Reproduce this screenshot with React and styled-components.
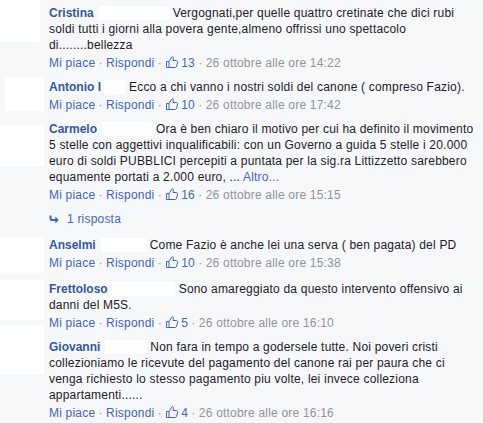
import React from "react";
import styled, { createGlobalStyle } from "styled-components";

const GlobalStyle = createGlobalStyle`
  html, body {
    margin: 0;
    padding: 0;
    background: #f6f7f9;
  }
  body {
    font-family: "Liberation Sans", Arial, Helvetica, sans-serif;
    font-size: 12px;
    line-height: 16px;
    letter-spacing: 0.2px;
    color: #1d2129;
  }
`;

const List = styled.div`
  padding: 5px 4px 0 0;
  width: 483px;
  box-sizing: border-box;
`;

const Row = styled.div`
  display: flex;
  align-items: flex-start;
  margin-bottom: ${(p) => p.$gap ?? 8}px;
`;

const AvatarSlot = styled.div`
  flex: none;
  width: 49px;
`;

const Avatar = styled.div`
  background: #ffffff;
  width: ${(p) => p.$w}px;
  height: ${(p) => p.$h}px;
  margin-left: ${(p) => p.$x}px;
  margin-top: ${(p) => p.$y}px;
`;

const Content = styled.div`
  flex: 1;
  min-width: 0;
`;

const Body = styled.p`
  margin: 0;
`;

const Name = styled.a`
  color: #365899;
  font-weight: bold;
  letter-spacing: 0;
  text-decoration: none;
`;

const Redact = styled.span`
  display: inline-block;
  width: ${(p) => p.$w}px;
  height: 14px;
  background: #ffffff;
  vertical-align: -3px;
  margin: 0 4px 0 ${(p) => p.$ml ?? 5}px;
`;

const More = styled.a`
  color: #4267b2;
  text-decoration: none;
`;

const Actions = styled.div`
  margin-top: 2px;
  color: #90949c;
  display: flex;
  align-items: center;
  white-space: nowrap;
`;

const ActionLink = styled.a`
  color: #4267b2;
  text-decoration: none;
`;

const Sep = styled.span`
  padding: 0 3.3px;
`;

const Likes = styled.span`
  display: inline-flex;
  align-items: center;
  color: #4267b2;
  gap: 2px;
`;

const ReplyRow = styled.div`
  display: flex;
  align-items: center;
  padding-left: 49px;
  margin-bottom: 10px;
  color: #4267b2;
  gap: 8px;
`;

const ThumbIcon = () => (
  <svg width="14" height="14" viewBox="0 0 14 14" fill="none" style={{ marginTop: -2 }}>
    <path
      d="M1.5 6.5h2.5v6h-2.5z"
      stroke="#4267b2"
      strokeWidth="1"
      strokeLinejoin="round"
    />
    <path
      d="M4 6.5l2.6-4.3c.5-.9 1.9-.5 1.8.6l-.4 2.7h3.4c.8 0 1.4.7 1.2 1.5l-1 4.4c-.2.7-.7 1.1-1.3 1.1H4"
      stroke="#4267b2"
      strokeWidth="1"
      strokeLinejoin="round"
    />
  </svg>
);

const ReplyIcon = () => (
  <svg width="10" height="9" viewBox="0 0 10 9" fill="none">
    <path d="M1.5 0.5V3.2c0 1.1.8 1.8 1.8 1.8H7" stroke="#4267b2" strokeWidth="2" />
    <path d="M6.3 1.5L9.8 5 6.3 8.5z" fill="#4267b2" />
  </svg>
);

const comments = [
  {
    name: "Cristina",
    redact: 70,
    avatar: { x: 0, y: -5, w: 40, h: 42 },
    text: "Vergognati,per quelle quattro cretinate che dici rubi soldi tutti i giorni alla povera gente,almeno offrissi uno spettacolo di........bellezza",
    likes: 13,
    time: "14:22",
    gap: 8,
  },
  {
    name: "Antonio I",
    redact: 21,
    redactMl: 3,
    avatar: { x: 5, y: -2, w: 39, h: 34 },
    text: "Ecco a chi vanno i nostri soldi del canone ( compreso Fazio).",
    likes: 10,
    time: "17:42",
    gap: 8,
  },
  {
    name: "Carmelo",
    redact: 50,
    avatar: { x: 0, y: 4, w: 44, h: 41 },
    text: "Ora è ben chiaro il motivo per cui ha definito il movimento 5 stelle con aggettivi inqualificabili: con un Governo a guida 5 stelle i 20.000 euro di soldi PUBBLICI percepiti a puntata per la sig.ra Littizzetto sarebbero equamente portati a 2.000 euro, ...",
    more: "Altro...",
    likes: 16,
    time: "15:15",
    gap: 8,
    replies: "1 risposta",
  },
  {
    name: "Anselmi",
    redact: 45,
    avatar: { x: 0, y: 0, w: 44, h: 36 },
    text: "Come Fazio è anche lei una serva ( ben pagata) del PD",
    likes: 10,
    time: "15:38",
    gap: 8,
  },
  {
    name: "Frettoloso",
    redact: 64,
    redactMl: 3,
    avatar: { x: 0, y: -1, w: 44, h: 40 },
    text: "Sono amareggiato da questo intervento offensivo ai danni del M5S.",
    likes: 5,
    time: "16:10",
    gap: 8,
  },
  {
    name: "Giovanni",
    redact: 41,
    avatar: { x: 0, y: -14, w: 44, h: 49 },
    text: "Non fara in tempo a godersele tutte. Noi poveri cristi collezioniamo le ricevute del pagamento del canone rai per paura che ci venga richiesto lo stesso pagamento piu volte, lei invece colleziona appartamenti......",
    likes: 4,
    time: "16:16",
    gap: 0,
  },
];

const Comment = ({ c }) => (
  <>
    <Row $gap={c.gap}>
      <AvatarSlot>
        <Avatar $x={c.avatar.x} $y={c.avatar.y} $w={c.avatar.w} $h={c.avatar.h} />
      </AvatarSlot>
      <Content>
        <Body>
          <Name href="#">{c.name}</Name>
          <Redact $w={c.redact} $ml={c.redactMl} />
          {c.text}
          {c.more && (
            <>
              {" "}
              <More href="#">{c.more}</More>
            </>
          )}
        </Body>
        <Actions>
          <ActionLink href="#">Mi piace</ActionLink>
          <Sep>·</Sep>
          <ActionLink href="#">Rispondi</ActionLink>
          <Sep>·</Sep>
          <Likes>
            <ThumbIcon />
            {c.likes}
          </Likes>
          <Sep>·</Sep>
          <span>26 ottobre alle ore {c.time}</span>
        </Actions>
      </Content>
    </Row>
    {c.replies && (
      <ReplyRow>
        <ReplyIcon />
        <span>{c.replies}</span>
      </ReplyRow>
    )}
  </>
);

export default function App() {
  return (
    <>
      <GlobalStyle />
      <List>
        {comments.map((c) => (
          <Comment key={c.name} c={c} />
        ))}
      </List>
    </>
  );
}
